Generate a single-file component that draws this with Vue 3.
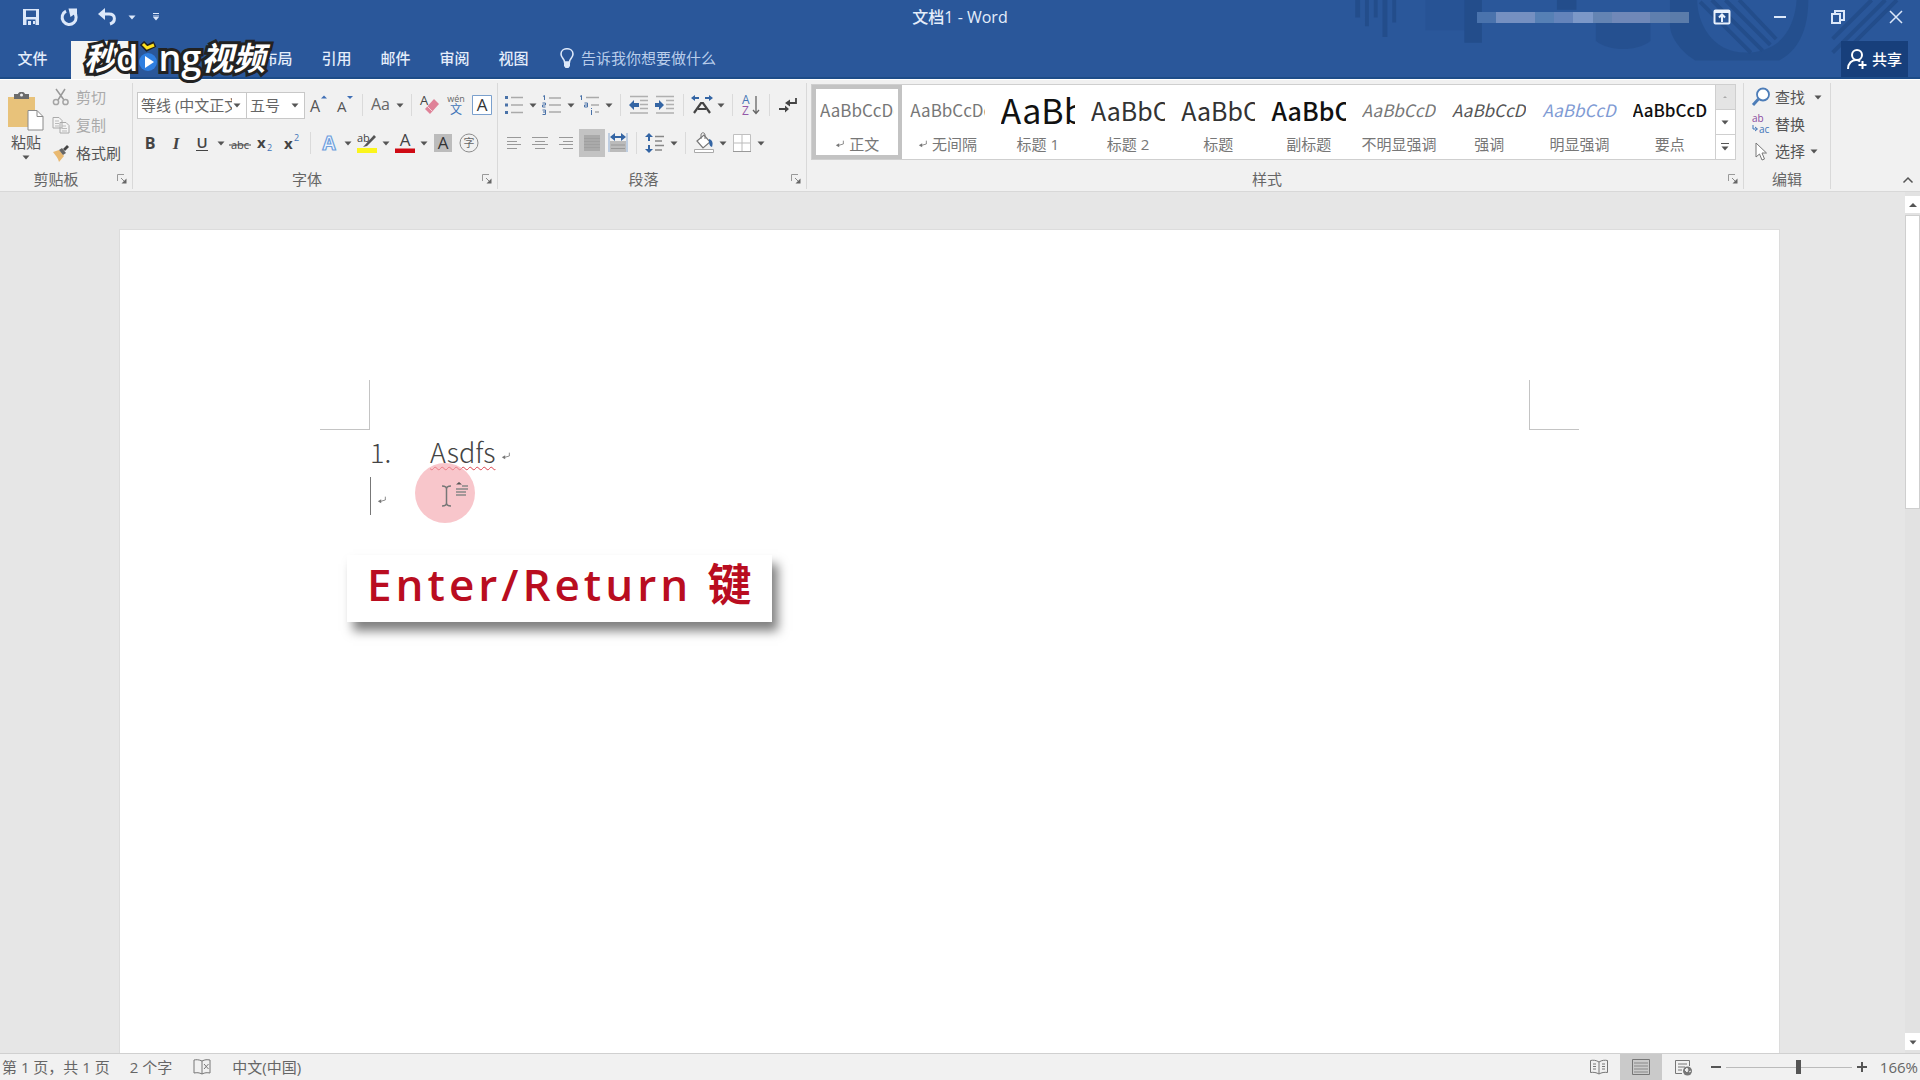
<template>
  <div class="word">
    <header class="top">
      <!-- Office background pattern -->
      <svg class="pattern" viewBox="0 0 580 78" aria-hidden="true">
        <g fill="#234d8b">
          <path d="M8 0h5v18H8zM18 0h4v27h-4zM27 0h4v18h-4zM36 0h5v38h-5zM46 0h4v23h-4z" />
          <path d="M120 0h18v44h-18zM215 0h20v10h-20z" />
          <path d="M80 0h40v31H80z" opacity=".35" />
          <path d="M255 22h56v20c-14 11-42 11-56 0z" opacity=".7" />
          <path d="M331 0h28c0 22 14 54 50 54s50-26 52-54h12c0 30-10 52-30 62h-86c-14-8-26-24-26-36z" opacity=".8" />
        </g>
        <path d="M362 2l52 52M374 0l52 52M388 0l46 46M402 0l38 40M498 40l40-40M498 54l54-54M520 44l44-44" stroke="#234d8b" stroke-width="4" />
      </svg>
      <div class="titlebar">
        <nav class="quick" aria-label="快速访问工具栏">
          <button v-for="q in quick" :key="q.icon" :class="{ small: q.small }" :aria-label="q.label">
            <Icon :name="q.icon" :size="q.small ? 10 : 20" />
          </button>
          </nav>
        <h1>文档1 - Word</h1>
        <div class="window">
          <span class="account"><i v-for="(c, n) in account" :key="n" :style="{ background: c }"></i></span>
          <button v-for="w in windowButtons" :key="w.icon" :aria-label="w.label"><Icon :name="w.icon" :size="20" /></button>
        </div>
      </div>
      <div class="tabs">
        <button class="file">文件</button>
        <button class="active" aria-label="开始"></button>
        <button aria-label="插入"></button>
        <button aria-label="设计"></button>
        <button v-for="t in tabs" :key="t">{{ t }}</button>
        <button class="tell"><Icon name="bulb" :size="20" />告诉我你想要做什么</button>
        <button class="share"><Icon name="person" :size="20" />共享</button>
      </div>
      <div class="brand">
        <span class="slant">秒</span><span class="latin">d</span>
        <svg viewBox="0 0 20 34" class="play">
          <path d="M4 2l5 5 8-4" fill="none" stroke="#222" stroke-width="6" />
          <path d="M5 3l4 4 7-3" fill="none" stroke="#ffe21f" stroke-width="3" />
          <circle cx="10" cy="21" r="9" fill="#2f7fe0" /><path d="M7 15l9 6-9 6z" fill="#fff" />
        </svg>
        <span class="latin">ng</span><span class="slant">视频</span>
      </div>
    </header>

    <section class="ribbon">
      <div class="group clip">
        <div class="body">
          <button class="paste">
            <svg viewBox="0 0 36 40" class="board">
              <path d="M0 5h27v30H0z" fill="#e8c27a" />
              <path d="M6 2h4c1-3 6-3 7 0h4v5H6z" fill="#6b6b6b" />
              <circle cx="13.5" cy="3" r="1.5" fill="#f1f1f1" />
              <path d="M20 18.5h9l6 6V38H20z" fill="#fff" stroke="#8a8a8a" />
              <path d="M29 18.5v6h6" fill="none" stroke="#8a8a8a" />
            </svg>
            <span>粘贴</span>
            <Icon name="caret" :size="10" />
          </button>
          <div class="stack">
            <button class="off"><Icon name="cut" :size="18" />剪切</button>
            <button class="off"><Icon name="copy" :size="18" />复制</button>
            <button><Icon name="brush" :size="18" />格式刷</button>
          </div>
        </div>
        <div class="caption"><span>剪贴板</span><button aria-label="剪贴板选项"><Icon name="launcher" :size="12" /></button></div>
      </div>

      <div class="group font">
        <div class="rows">
          <div class="row">
            <label class="combo"><select aria-label="字体名称"><option>等线 (中文正文)</option></select><Icon name="caret" :size="10" /></label>
            <label class="combo size"><select aria-label="字号"><option>五号</option></select><Icon name="caret" :size="10" /></label>
            <template v-for="(t, n) in fontTop" :key="n">
              <i v-if="t === '|'" class="sep"></i>
              <button v-else :class="{ drop: t === 'caret' }" :aria-label="t"><Icon :name="t" :size="t === 'caret' ? 10 : 22" /></button>
            </template>
          </div>
          <div class="row">
            <template v-for="(t, n) in fontBottom" :key="n">
              <i v-if="t === '|'" class="sep"></i>
              <button v-else :class="{ drop: t === 'caret' }" :aria-label="t"><Icon :name="t" :size="t === 'caret' ? 10 : 22" /></button>
            </template>
          </div>
        </div>
        <div class="caption"><span>字体</span><button aria-label="字体选项"><Icon name="launcher" :size="12" /></button></div>
      </div>

      <div class="group para">
        <div class="rows">
          <div v-for="(r, k) in paragraph" :key="k" class="row">
            <template v-for="(t, n) in r" :key="n">
              <i v-if="t === '|'" class="sep"></i>
              <button v-else :class="{ drop: t === 'caret', pressed: t === 'justify' }" :aria-label="t"><Icon :name="t" :size="t === 'caret' ? 10 : 22" /></button>
            </template>
          </div>
        </div>
        <div class="caption"><span>段落</span><button aria-label="段落选项"><Icon name="launcher" :size="12" /></button></div>
      </div>

      <div class="group styles">
        <div class="gallery">
          <button v-for="(s, n) in styles" :key="s.name" class="style" :class="{ chosen: n === 0 }">
            <span class="sample" :class="s.look">{{ s.text }}</span>
            <span class="name"><Icon v-if="n < 2" name="enter" :size="10" />{{ s.name }}</span>
          </button>
          <div class="scroller">
            <button class="dim" aria-label="上一行"><Icon name="up" :size="10" /></button>
            <button aria-label="下一行"><Icon name="caret" :size="10" /></button>
            <button aria-label="其他"><Icon name="expand" :size="10" /></button>
          </div>
        </div>
        <div class="caption"><span>样式</span><button aria-label="样式选项"><Icon name="launcher" :size="12" /></button></div>
      </div>

      <div class="group edit">
        <div class="stack">
          <button><Icon name="find" :size="20" />查找<Icon name="caret" :size="10" class="far" /></button>
          <button><Icon name="replace" :size="20" />替换</button>
          <button><Icon name="select" :size="20" />选择<Icon name="caret" :size="10" /></button>
        </div>
        <div class="caption"><span>编辑</span></div>
      </div>
      <div class="rest">
        <button aria-label="折叠功能区"><Icon name="fold" :size="12" /></button>
      </div>
    </section>

    <main class="workspace">
      <article class="page">
        <div class="margins"><i class="corner tl"></i><i class="corner tr"></i></div>
        <div class="text">
          <p><span class="num">1.</span><span class="typo">Asdfs</span><Icon name="enter" :size="10" class="mark" /></p>
          <p><i class="cursor"></i><Icon name="enter" :size="10" class="mark" /></p>
          <svg class="pointer" viewBox="0 0 60 60" aria-hidden="true">
            <circle cx="30" cy="30" r="30" fill="#f4a0a8" fill-opacity=".6" />
            <path d="M27 23c3 0 4.500 1 4.500 3v14c0 2-1.500 3-4.500 3M36 23c-3 0-4.500 1-4.500 3M36 43c-3 0-4.500-1-4.500-3" fill="none" stroke="#777" stroke-width="1.5" />
            <path d="M41 21.500l3-2.500 3 2.500z" fill="#555" /><path d="M47 23h6M41 26h12M41 29h10M41 32h10" stroke="#888" stroke-width="1.5" />
          </svg>
        </div>
        <div class="callout">Enter/Return 键</div>
      </article>
      <div class="scrollbar">
        <button aria-label="向上滚动"><Icon name="scrollup" :size="10" /></button>
        <div class="track"><div class="thumb"></div></div>
        <button aria-label="向下滚动"><Icon name="caret" :size="10" /></button>
      </div>
    </main>

    <footer class="status">
      <span>第 1 页，共 1 页</span>
      <span>2 个字</span>
      <Icon name="proof" :size="20" />
      <span>中文(中国)</span>
      <div class="views">
        <button v-for="v in views" :key="v.icon" :class="{ current: v.icon === 'print' }" :aria-label="v.label"><Icon :name="v.icon" :size="20" /></button>
      </div>
      <button class="step" aria-label="缩小"><Icon name="minus" :size="12" /></button>
      <input v-model="zoom" type="range" min="10" max="280" aria-label="缩放">
      <button class="step" aria-label="放大"><Icon name="plus" :size="12" /></button>
      <span class="percent">{{ zoom }}%</span>
    </footer>
  </div>
</template>

<script setup>
import { h, ref } from 'vue';

// Markup of each icon, drawn in a square box: [box size, shapes]
const art = {
  caret: [10, '<path d="M1.5 3.5h7L5 7.5z" fill="#555"/>'],
  up: [10, '<path d="M3 6h4L5 4z" fill="#aaa"/>'],
  scrollup: [10, '<path d="M1 7h8L5 3z" fill="#555"/>'],
  expand: [10, '<path d="M1 1.5h8" stroke="#555"/><path d="M1.5 4.5h7L5 8.5z" fill="#555"/>'],
  fold: [12, '<path d="M1.5 8.5L6 4l4.5 4.5" fill="none" stroke="#555" stroke-width="1.5"/>'],
  minus: [12, '<path d="M1 6h10" stroke="#555" stroke-width="2"/>'],
  plus: [12, '<path d="M1 6h10M6 1v10" stroke="#555" stroke-width="2"/>'],
  launcher: [12, '<path d="M1.5 8V1.5H8" fill="none" stroke="#999"/><path d="M5 5l4 4" stroke="#888"/><path d="M10.5 5.5v5h-5z" fill="#666"/>'],
  enter: [12, '<path d="M10 2v4L3 8" fill="none" stroke="#777"/><path d="M1 7.5l4-2.500v5z" fill="#777"/>'],

  save: [20, '<path d="M2 2h16v16H2z" fill="#dce8fa"/><path d="M5 3.500h10v6.500H5zM5.500 12.500h9V18h-9z" fill="#2a579a"/><path d="M7 14h3v4H7zM12 14h2v3h-2z" fill="#dce8fa"/>'],
  redo: [20, '<path d="M14.500 5A7 7 0 1 1 7 4.200" fill="none" stroke="#dce8fa" stroke-width="3"/><path d="M9.500 1.500H18V10l-3-2.500-3.500 2.500z" fill="#dce8fa"/>'],
  undo: [20, '<path d="M5 7h7c7 0 7 8 1 10" fill="none" stroke="#dce8fa" stroke-width="3"/><path d="M1 7l7-6v12z" fill="#dce8fa"/>'],
  undomenu: [10, '<path d="M1.500 3.500h7L5 7.500z" fill="#dce8fa"/>'],
  more: [10, '<path d="M2 1.500h6M2 4h6" stroke="#dce8fa"/><path d="M2 5h6L5 8.500z" fill="#dce8fa"/>'],
  display: [20, '<rect x="2.500" y="3.500" width="15" height="13" rx="1" fill="none" stroke="#e8f0fc" stroke-width="2"/><path d="M3 5h14" stroke="#e8f0fc" stroke-width="2"/><path d="M10 15V8M7 10.500l3-3 3 3" fill="none" stroke="#e8f0fc" stroke-width="2"/>'],
  minimise: [20, '<path d="M4 10h12" stroke="#dce8fa" stroke-width="2"/>'],
  restore: [20, '<path d="M4 7h8v9H4zM7 7V4h9v9h-4" fill="none" stroke="#dce8fa" stroke-width="2"/>'],
  close: [20, '<path d="M4 4l12 12M16 4L4 16" stroke="#dce8fa" stroke-width="1.500"/>'],
  bulb: [20, '<path d="M7.500 14c0-3-3.500-4-3.500-8 0-7 12-7 12 0 0 4-3.500 5-3.500 8z" fill="none" stroke="#dce8fa" stroke-width="1.600"/><path d="M7 14h6v4l-1.500 2h-3L7 18z" fill="#dce8fa"/>'],
  person: [20, '<circle cx="10" cy="6" r="5" fill="none" stroke="#fff" stroke-width="2"/><path d="M1 20c0-6 4-9 8-9 2 0 3 .5 4 1.500M15.500 12v8M11.500 16h8" fill="none" stroke="#fff" stroke-width="2"/>'],

  cut: [18, '<path d="M4 1l8 11M13 1L6 12" stroke="#999" stroke-width="1.500"/><circle cx="4" cy="14" r="2.600" fill="none" stroke="#a5a5a5" stroke-width="1.500"/><circle cx="13.500" cy="14" r="2.600" fill="none" stroke="#a5a5a5" stroke-width="1.500"/>'],
  copy: [18, '<path d="M1 1.500h6l3 3V12H1zM8 6.500h6l3 3V17H8z" fill="#f4f4f4" stroke="#aaa"/><path d="M3 5h4M3 7.500h4M3 10h4M10 10h4M10 12.500h5M10 15h5" stroke="#bbb"/>'],
  brush: [18, '<path d="M1 8l6-2 5 6-5 6c-1-4-3-6-6-10z" fill="#e9b971"/><path d="M7 6l3-2 4 5-3 2z" fill="#666"/><path d="M11 5l4-4 2 2-4 4z" fill="#444"/>'],

  grow: [22, '<text x="3" y="18" font-size="16" fill="#555">A</text><path d="M14 4.500l3-3 3 3z" fill="#3f6fb5"/>'],
  shrink: [22, '<text x="4" y="18" font-size="15" fill="#555">A</text><path d="M14 2h6l-3 3z" fill="#3f6fb5"/>'],
  case: [22, '<text x="1" y="16" font-size="16" fill="#666">Aa</text>'],
  eraser: [22, '<text x="1" y="11" font-size="13" fill="#444">A</text><path d="M6 15l9-10 5 5-9 10z" fill="#df8298"/><path d="M8 12l5 5" stroke="#f6d2da"/>'],
  pinyin: [22, '<text x="11" y="8" text-anchor="middle" font-size="9" fill="#666">wén</text><text x="11" y="20" text-anchor="middle" font-size="12" fill="#3f74b8">文</text>'],
  boxed: [22, '<path d="M1.500 1.500h19v19h-19z" fill="#fff" stroke="#7ba0cd"/><text x="11" y="17" text-anchor="middle" font-size="17" fill="#333">A</text>'],
  bold: [22, '<text x="11" y="17" text-anchor="middle" font-size="16" font-weight="700" fill="#444">B</text>'],
  italic: [22, '<text x="11" y="17" text-anchor="middle" font-size="17" font-style="italic" font-weight="700" font-family="Liberation Serif, serif" fill="#444">I</text>'],
  underline: [22, '<text x="11" y="16" text-anchor="middle" font-size="15" font-weight="600" fill="#444">U</text><path d="M5 18.500h12" stroke="#444"/>'],
  strike: [22, '<text x="11" y="17" text-anchor="middle" font-size="11" fill="#444">abc</text><path d="M0 13h22" stroke="#444"/>'],
  sub: [22, '<text x="2" y="16" font-size="15" font-weight="700" fill="#444">x</text><text x="12" y="19" font-size="9" fill="#3f74b8">2</text>'],
  super: [22, '<text x="3" y="17" font-size="15" font-weight="700" fill="#444">x</text><text x="13" y="9" font-size="9" fill="#3f74b8">2</text>'],
  effect: [22, '<text x="11" y="18" text-anchor="middle" font-size="19" font-weight="700" fill="#eef5ff" stroke="#6e9fdc" stroke-width="1.200">A</text>'],
  highlight: [22, '<text x="1" y="10" font-size="11" fill="#444">ab</text><path d="M8 14L18 3l2 2-9 9-4 1z" fill="#555"/><path d="M1 16h20v5H1z" fill="#fbf51c"/>'],
  fontcolor: [22, '<text x="11" y="14" text-anchor="middle" font-size="17" fill="#444">A</text><path d="M1 16.500h20V21H1z" fill="#cf0a14"/>'],
  shade: [22, '<path d="M2 2h18v18H2z" fill="#bcbcbc"/><text x="11" y="17" text-anchor="middle" font-size="17" fill="#333">A</text>'],
  circled: [22, '<circle cx="11" cy="11" r="9" fill="none" stroke="#8d8d8d"/><text x="11" y="15" text-anchor="middle" font-size="11" fill="#666">字</text>'],

  bullets: [22, '<path d="M2 2h3v3H2zM2 9.500h3v3H2zM2 17h3v3H2z" fill="#4a72a8"/><path d="M8 3.500h12M8 11h12M8 18.500h12" stroke="#aaa" stroke-width="1.500"/>'],
  numbers: [22, '<path d="M2 2.500l1.500-1V6M1.500 9h3v2h-3v2h3M1.500 16h3v4.500h-3M2 18h2" fill="none" stroke="#4a72a8"/><path d="M8 4h12M8 11h12M8 18h12" stroke="#aaa" stroke-width="1.500"/>'],
  multilevel: [22, '<path d="M1 2.500l1.500-1V6M5.500 9h3v4h-3v-2h3M12.500 16v5M12.500 14v1" fill="none" stroke="#4a72a8"/><path d="M7 3.500h13M12 11h8M16 18h4" stroke="#aaa" stroke-width="1.500"/>'],
  outdent: [22, '<path d="M2 2.500h18M12 6.500h8M12 10.500h8M12 14.500h8M2 19h18" stroke="#b0b0b0" stroke-width="1.500"/><path d="M1 11l5-5v3h5v4H6v3z" fill="#3465a4"/>'],
  indent: [22, '<path d="M2 2.500h18M12 6.500h8M12 10.500h8M12 14.500h8M2 19h18" stroke="#b0b0b0" stroke-width="1.500"/><path d="M10 11L5 6v3H1v4h4v3z" fill="#3465a4"/>'],
  asian: [22, '<path d="M3 19l7-10h2l7 10M7 15h8" fill="none" stroke="#444" stroke-width="2.200"/><path d="M0 4l4-3v2h4v2H4v2zM22 4l-4-3v2h-4v2h4v2z" fill="#3465a4"/>'],
  sort: [22, '<text x="2" y="10" font-size="12" fill="#4474b5">A</text><text x="2" y="21" font-size="12" fill="#9358a8">Z</text><path d="M16 2v17M13 16l3 3.500 3-3.500" fill="none" stroke="#666" stroke-width="1.300"/>'],
  marks: [22, '<path d="M19 4v5h-8M2 15h8" fill="none" stroke="#444" stroke-width="1.800"/><path d="M8 9l5-3.500v7zM12 15l-4-3.500v7z" fill="#444"/>'],
  left: [22, '<path d="M4 5.500h14M4 9.500h10M4 12.500h14M4 16.500h10" stroke="#999"/>'],
  center: [22, '<path d="M3 5.500h16M6 9.500h10M3 12.500h16M6 16.500h10" stroke="#999"/>'],
  right: [22, '<path d="M4 5.500h14M8 9.500h10M4 12.500h14M8 16.500h10" stroke="#999"/>'],
  justify: [22, '<path d="M3 3h16v16H3z" fill="#aaa"/><path d="M3 6.500h16M3 9.500h16M3 12.500h16M3 15.500h16" stroke="#a0a0a0"/>'],
  distribute: [22, '<path d="M3 9h16v11H3z" fill="#bbb"/><path d="M2 1v19M20 1v19" stroke="#8aa9d0"/><path d="M4 13h14M4 16.500h14" stroke="#999"/><path d="M3 5l5-4v3h6V1l5 4-5 4V6H8v3z" fill="#3465a4"/>'],
  spacing: [22, '<path d="M5 1l4 4H6v4H4V5H1zM5 21l4-4H6v-4H4v4H1z" fill="#3465a4"/><path d="M11 4.500h9M11 9h7M11 13.500h9M11 18h7" stroke="#888" stroke-width="1.300"/>'],
  bucket: [22, '<path d="M4 9l7-6 6 7-7 6z" fill="#fff" stroke="#777" stroke-width="1.200"/><path d="M8 7V3c0-3 4-3 4 0v4" fill="none" stroke="#777"/><path d="M16 7c4 1 4 5 3 8-3-1-3-4-3-8z" fill="#3465a4"/><path d="M1.500 17.500h19v3h-19z" fill="#fff" stroke="#aaa"/>'],
  borders: [22, '<path d="M2.500 2.500h17v17h-17z" fill="#fff" stroke="#c0c0c0"/><path d="M11 3v16M3 11h16" stroke="#bbb"/><path d="M2 19.500h18" stroke="#999"/>'],

  find: [20, '<circle cx="12" cy="7.500" r="6" fill="#fff" stroke="#4d7db8" stroke-width="1.800"/><path d="M7.500 12L2 18" stroke="#4d7db8" stroke-width="3"/>'],
  replace: [20, '<text x="1" y="8" font-size="10" fill="#8a4aa0">ab</text><text x="8" y="19" font-size="10" fill="#3f74b8">ac</text><path d="M2 11v4h4M4 13l2.500 2L4 17" fill="none" stroke="#3f74b8"/>'],
  select: [20, '<path d="M5 2v14l3.500-3 2.500 6 2.500-1-2.500-6h4.500z" fill="#fff" stroke="#777"/>'],

  proof: [20, '<path d="M10 4c-3-1.500-6-1.500-8-1v13c3-.5 5-.5 8 1zM10 4c3-1.500 5-1.500 8-1v13c-3-.5-5-.5-8 1M12 7l4.500 5M16.500 7L12 12" fill="none" stroke="#777"/>'],
  read: [20, '<path d="M10 17V5C7 3 4 3 1.500 3.500v12c3-.5 6 0 8.500 1.500 2.500-1.500 5.500-2 8.500-1.500v-12C16 3 13 3 10 5" fill="none" stroke="#777"/><path d="M4 7h3M4 9.500h3M4 12h3M13 7h3M13 9.500h3M13 12h3" stroke="#777"/>'],
  print: [20, '<path d="M1.500 2.500h17v15h-17z" fill="none" stroke="#777"/><path d="M3 6h14M3 9h14M3 12h14M3 15h14" stroke="#888"/>'],
  web: [20, '<path d="M9 16.500H2.500v-13h14V9M5 7h9M5 10h7M5 13h4" fill="none" stroke="#777"/><circle cx="14.500" cy="14" r="4.500" fill="#777"/><path d="M12 13l2-2 1 2-1 2zM16 15l2-1" fill="#eee" stroke="#eee"/>'],
};

const Icon = (props) => h('svg', {
  viewBox: `0 0 ${art[props.name][0]} ${art[props.name][0]}`,
  width: props.size,
  height: props.size,
  innerHTML: art[props.name][1],
});
Icon.props = ['name', 'size'];

const zoom = ref(166);

const quick = [
  { icon: 'save', label: '保存' },
  { icon: 'redo', label: '重复' },
  { icon: 'undo', label: '撤消' },
  { icon: 'undomenu', label: '撤消列表', small: true },
  { icon: 'more', label: '自定义', small: true },
];
const windowButtons = [
  { icon: 'display', label: '功能区显示选项' },
  { icon: 'minimise', label: '最小化' },
  { icon: 'restore', label: '还原' },
  { icon: 'close', label: '关闭' },
];
const account = ['#4a73ad', '#7590c1', '#7590c1', '#5680b5', '#6484bb', '#7c98c8', '#6484b3', '#7088b8', '#7088b8', '#5f7fae', '#5b7caa'];
const tabs = ['布局', '引用', '邮件', '审阅', '视图'];

// 'caret' is a drop-down arrow, '|' a separator
const fontTop = ['grow', 'shrink', '|', 'case', 'caret', '|', 'eraser', 'pinyin', 'boxed'];
const fontBottom = [
  'bold', 'italic', 'underline', 'caret', 'strike', 'sub', 'super', '|',
  'effect', 'caret', 'highlight', 'caret', 'fontcolor', 'caret', 'shade', 'circled',
];
const paragraph = [
  ['bullets', 'caret', 'numbers', 'caret', 'multilevel', 'caret', '|', 'outdent', 'indent', '|', 'asian', 'caret', '|', 'sort', '|', 'marks'],
  ['left', 'center', 'right', 'justify', 'distribute', '|', 'spacing', 'caret', '|', 'bucket', 'caret', 'borders', 'caret'],
];
const styles = [
  { name: '正文', text: 'AaBbCcDd', look: '' },
  { name: '无间隔', text: 'AaBbCcDd', look: '' },
  { name: '标题 1', text: 'AaBb', look: 'huge' },
  { name: '标题 2', text: 'AaBbC', look: 'big' },
  { name: '标题', text: 'AaBbC', look: 'big' },
  { name: '副标题', text: 'AaBbC', look: 'big strong' },
  { name: '不明显强调', text: 'AaBbCcDd', look: 'slanted' },
  { name: '强调', text: 'AaBbCcDd', look: 'slanted dark' },
  { name: '明显强调', text: 'AaBbCcDd', look: 'slanted blue' },
  { name: '要点', text: 'AaBbCcD', look: 'strong' },
];
const views = [
  { icon: 'read', label: '阅读视图' },
  { icon: 'print', label: '页面视图' },
  { icon: 'web', label: 'Web 版式视图' },
];
</script>

<style>
body {
  margin: 0;
  overflow: hidden;
}
</style>

<style scoped>
.word {
  display: flex;
  flex-direction: column;
  height: 100vh;
  background: #e6e6e6;
  color: #555;
  font: 15px/20px "Open Sans", "Noto Sans CJK SC", sans-serif;
}
button {
  display: flex;
  align-items: center;
  justify-content: center;
  padding: 0;
  border: 0;
  background: none;
  color: inherit;
  font: inherit;
  white-space: nowrap;
}
svg { flex: none; }

.top {
  position: relative;
  background: #2a579a;
  color: #e4edfb;
  border-bottom: 2px solid #1d4c88;
}
.pattern { position: absolute; top: 0; right: 0; width: 580px; height: 76px; }
.titlebar {
  position: relative;
  display: grid;
  grid-template-columns: 1fr auto 1fr;
  align-items: center;
  height: 34px;
}
.quick { display: flex; padding-left: 12px; }
.quick button { width: 38px; height: 34px; }
.quick .small { width: 12px; }
.quick .small:last-child { margin-left: 12px; }
h1 { margin: 0; font-size: 16px; font-weight: 500; line-height: 32px; }
.window { display: flex; align-items: center; justify-content: flex-end; }
.window button { width: 58px; height: 32px; }
.window button:last-child { margin-right: -5px; }
.account { display: flex; width: 212px; height: 11px; margin-right: 4px; }
.account i { flex: 1; }
.tabs { position: relative; display: flex; align-items: flex-end; height: 43px; }
.tabs button { width: 59px; height: 38px; font-weight: 500; }
.tabs .file { width: 71px; padding-right: 6px; box-sizing: border-box; }
.tabs .active { background: #f4f4f4; border-bottom: 2px solid #f4f4f4; margin-bottom: -2px; }
.tabs .tell { width: auto; gap: 4px; margin-left: 14px; color: #b9cdea; font-weight: 400; }
.tabs .share { width: 67px; height: 36px; gap: 5px; margin: 0 12px 0 auto; background: #173f7b; color: #fff; }
.brand {
  position: absolute;
  left: 84px;
  top: 37px;
  display: flex;
  align-items: center;
  height: 42px;
  color: #fff;
  font-size: 32px;
  line-height: 42px;
  -webkit-text-stroke: 6px #222;
  paint-order: stroke fill;
}
.slant { font-style: italic; font-weight: 700; }
.latin { font-family: "Open Sans", sans-serif; font-size: 36px; font-weight: 600; }
.play { width: 20px; height: 34px; -webkit-text-stroke: 0; z-index: 1; }

.ribbon {
  display: flex;
  height: 113px;
  background: #f1f1f1;
  border-top: 1px solid #fff;
  border-bottom: 1px solid #d8d8d8;
  box-sizing: border-box;
}
.group {
  display: flex;
  flex-direction: column;
  margin: 3px 0 2px;
  border-right: 1px solid #d9d9d9;
  box-sizing: border-box;
}
.body { display: flex; }
.caption { display: flex; align-items: center; height: 20px; margin-top: auto; color: #666; }
.caption span { flex: 1; text-align: center; }
.caption button { width: 20px; height: 16px; }
.clip { width: 133px; }
.font { width: 365px; padding-left: 4px; }
.para { width: 309px; padding-left: 3px; }
.styles { flex: 1; min-width: 0; padding-left: 4px; }
.edit { width: 87px; }
.paste { flex-direction: column; width: 52px; padding-top: 4px; }
.board { width: 36px; height: 40px; }
.stack { display: flex; flex-direction: column; }
.stack button { height: 28px; justify-content: flex-start; gap: 6px; }
.off { color: #aaa; }
.rows { display: flex; flex-direction: column; gap: 10px; padding-top: 8px; }
.row { display: flex; align-items: center; height: 28px; }
.row button { width: 26px; height: 28px; }
.row .drop { width: 12px; }
.row .pressed { background: #c3c3c3; }
.sep { width: 1px; height: 22px; margin: 0 5px; background: #dadada; }
.combo {
  display: flex;
  align-items: center;
  width: 110px;
  height: 27px;
  padding-right: 4px;
  border: 1px solid #c8c8c8;
  background: #fff;
  box-sizing: border-box;
}
.combo.size { width: 58px; border-left: 0; }
.combo select {
  flex: 1;
  min-width: 0;
  padding: 0 0 0 3px;
  border: 0;
  background: none;
  appearance: none;
  color: #666;
  font: inherit;
}
.gallery {
  display: flex;
  height: 76px;
  margin: 1px 7px 0 0;
  border: 1px solid #cfcfcf;
  background: #fff;
  box-sizing: border-box;
}
.style {
  flex: 1;
  flex-direction: column;
  min-width: 0;
  padding: 0 8px;
  box-sizing: border-box;
}
.chosen { box-shadow: inset 0 0 0 4px #c3c3c3; }
.sample {
  width: 100%;
  height: 44px;
  overflow: hidden;
  color: #777;
  font: 17px/48px "Noto Sans CJK SC", sans-serif;
  text-align: left;
}
.sample.big { color: #333; font-size: 25px; }
.sample.huge { color: #111; font-size: 34px; }
.sample.strong { color: #111; font-weight: 500; }
.sample.slanted { font-style: italic; }
.sample.dark { color: #555; }
.sample.blue { color: #7f9bd4; }
.name { display: flex; align-items: center; gap: 4px; height: 28px; color: #777; }
.scroller { display: flex; flex-direction: column; width: 19px; border-left: 1px solid #cfcfcf; }
.scroller button { flex: 1; border-top: 1px solid #cfcfcf; }
.scroller .dim { background: #e4e4e4; border-top: 0; }
.edit .stack { padding-left: 7px; }
.edit .stack button { height: 27px; gap: 4px; }
.far { margin-left: 4px; }
.rest { display: flex; align-items: flex-end; justify-content: flex-end; width: 89px; }
.rest button { width: 24px; height: 22px; }

.workspace { display: flex; flex: 1; min-height: 0; }
.page {
  flex: 1;
  margin: 38px 126px 0 120px;
  padding: 150px 200px 0;
  background: #fff;
  box-shadow: 0 0 0 1px #dcdcdc;
}
.margins { display: flex; justify-content: space-between; }
.corner { width: 50px; height: 50px; border: 0 solid #c4c4c4; box-sizing: border-box; }
.tl { border-width: 0 1px 1px 0; }
.tr { border-width: 0 0 1px 1px; }
.text {
  position: relative;
  padding-left: 50px;
  color: #444;
  font: 300 27px/44px "Noto Sans CJK SC", sans-serif;
}
.text p { display: flex; align-items: center; height: 44px; margin: 0; }
.num { width: 60px; }
.typo { margin-right: 6px; text-decoration: underline wavy #dc4450 1px; text-underline-offset: 3px; }
.mark { margin-top: 8px; }
.cursor { width: 1px; height: 38px; margin-right: 6px; background: #777; }
.pointer { position: absolute; left: 95px; top: 33px; width: 60px; height: 60px; }
.callout {
  width: fit-content;
  margin: 37px 0 0 27px;
  padding: 0 16px 8px 20px;
  background: #fff;
  box-shadow: 6px 9px 10px rgba(0, 0, 0, .5);
  color: #b90d20;
  font-size: 44px;
  font-weight: 600;
  line-height: 59px;
  letter-spacing: 4px;
}
.scrollbar { display: flex; flex-direction: column; width: 15px; padding: 4px 0 3px; background: #e2e2e2; }
.scrollbar button { height: 17px; background: #fff; }
.track { flex: 1; padding-top: 2px; }
.thumb { height: 36%; background: #fff; border: 1px solid #cfcfcf; box-sizing: border-box; }

.status {
  display: flex;
  align-items: center;
  height: 27px;
  padding: 0 2px;
  gap: 20px;
  border-top: 1px solid #d0d0d0;
  background: #f1f1f1;
  color: #666;
  box-sizing: border-box;
}
.views { display: flex; align-self: stretch; margin-left: auto; margin-right: -14px; }
.views button { width: 42px; }
.views .current { background: #cacaca; }
.step { width: 12px; }
.status input {
  width: 126px;
  height: 16px;
  margin: 0 -16px;
  appearance: none;
  background: linear-gradient(#bbb, #bbb) center / 100% 1px no-repeat;
}
.status input::-webkit-slider-thumb { appearance: none; width: 5px; height: 14px; background: #555; }
.percent { margin-left: -8px; }
</style>
